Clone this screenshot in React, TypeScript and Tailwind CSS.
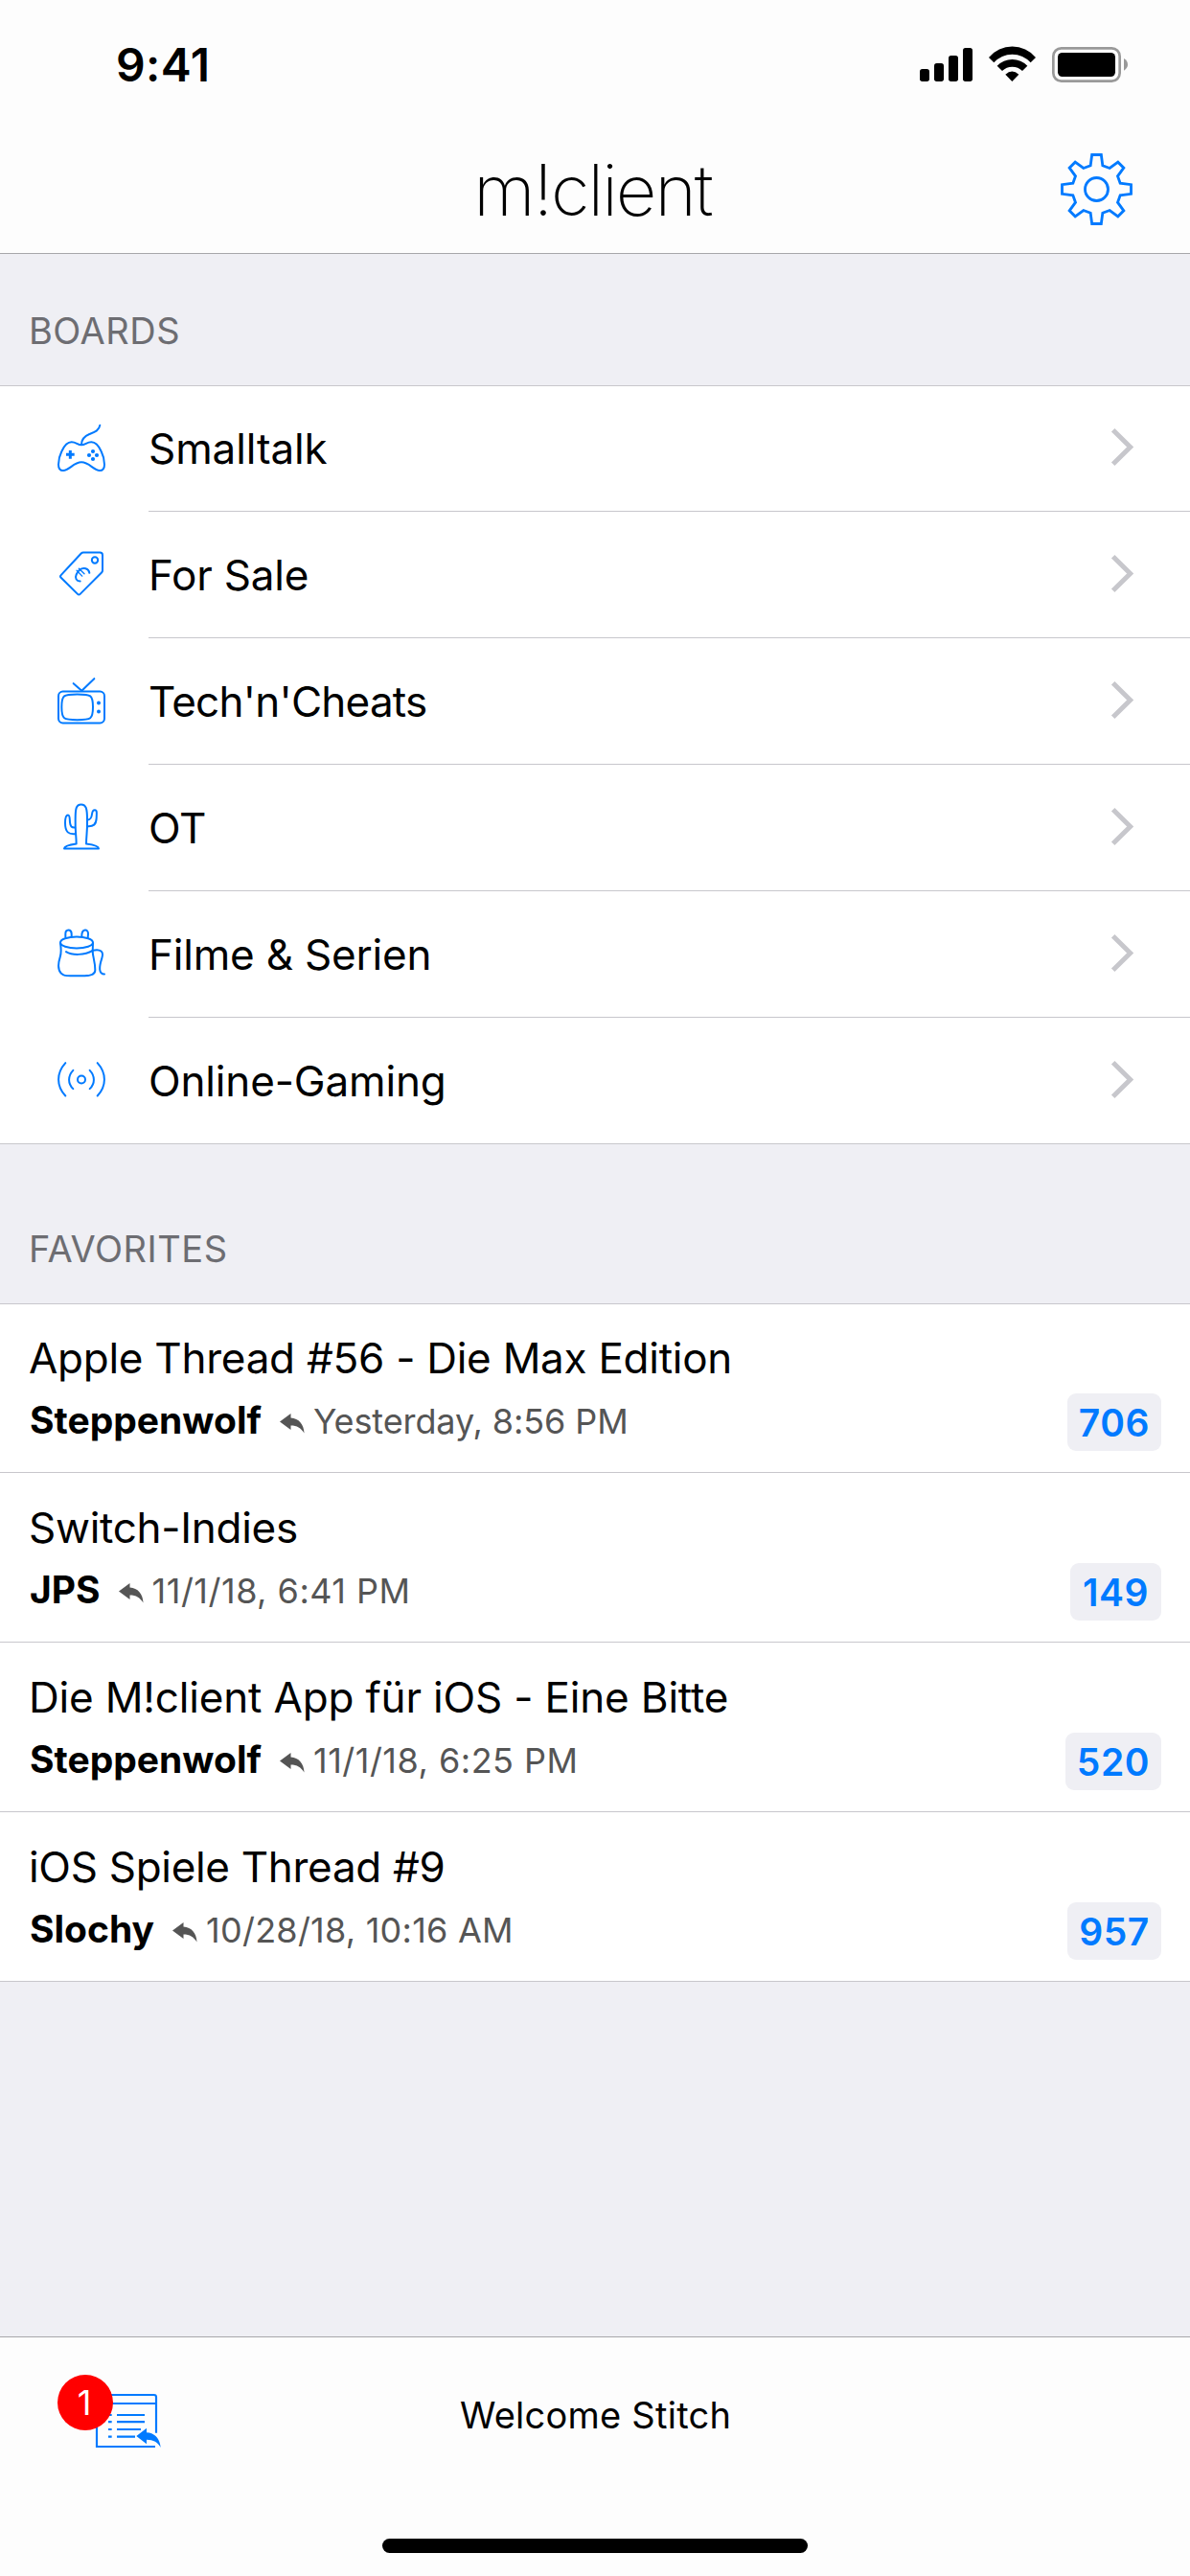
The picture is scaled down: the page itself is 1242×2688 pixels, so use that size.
import type { ReactNode } from "react";

type Board = { name: string; tracking: string; viewBox: string; drawing: ReactNode };

const boards: Board[] = [
  {
    name: "Smalltalk",
    tracking: "tracking-[-0.1px]",
    viewBox: "51 60 168 168",
    drawing: (
      <>
        <path d="M135 130C123 130 118 121 104 121C90 121 79 137 73 150C66 164 63 178 63 191C63 204 69 210 78 210C97 210 110 184 135 184C160 184 173 210 192 210C201 210 207 204 207 191C207 178 204 164 197 150C191 137 180 121 166 121C152 121 147 130 135 130Z" />
        <path d="M135 129C135 112 143 103 160 96C178 89 190 85 193 68" />
        <path d="M87 160H113M100 147V173" strokeWidth={9} strokeLinecap="butt" />
        <g fill="currentColor" stroke="none">
          <circle cx="171" cy="150" r="6.2" />
          <circle cx="159" cy="162" r="6.2" />
          <circle cx="183" cy="162" r="6.2" />
          <circle cx="171" cy="174" r="6.2" />
        </g>
      </>
    ),
  },
  {
    name: "For Sale",
    tracking: "tracking-[-0.2px]",
    viewBox: "51 454.5 168 168",
    drawing: (
      <>
        <path d="M141 468H193Q201 468 201 476V524Q201 528 198 531L131 598Q127 602 123 598L71 547Q67 543 71 539L134 471Q137 468 141 468Z" />
        <circle cx="177" cy="492" r="9.5" />
        <path d="M131 558C119 558 114 548 119 537C126 522 138 516 148 518C155 520 159 525 160 532" />
        <path d="M120 524L137 542M127 518L144 535" strokeWidth={4} />
      </>
    ),
  },
  {
    name: "Tech'n'Cheats",
    tracking: "tracking-[-0.75px]",
    viewBox: "51 70.5 168 168",
    drawing: (
      <>
        <rect x="63" y="123" width="144" height="99" rx="14" />
        <path d="M122 132C165 132 171 134 171 172C171 210 165 212 122 212C79 212 73 210 73 172C73 134 79 132 122 132Z" />
        <path d="M110 98L136 121L175 83" />
        <g fill="currentColor" stroke="none">
          <circle cx="189" cy="159" r="6" />
          <circle cx="189" cy="186" r="6" />
        </g>
      </>
    ),
  },
  {
    name: "OT",
    tracking: "tracking-[-0.4px]",
    viewBox: "51 466.5 168 168",
    drawing: (
      <>
        <path d="M119 600C119 575 115 560 116 525C116 490 118 477 134 477C150 477 153 490 153 525C154 560 150 575 150 600C165 602 189 606 189 615H81C81 606 105 602 119 600Z" />
        <path d="M116 569C95 571 84 564 84 535C84 518 87 510 93 510C99 510 98 520 99 533C100 545 104 550 115 549" />
        <path d="M155 525C164 524 167 517 168 507C169 498 172 494 177 494C184 494 183 503 182 520C181 540 172 546 155 545" />
      </>
    ),
  },
  {
    name: "Filme & Serien",
    tracking: "tracking-[-0.2px]",
    viewBox: "51 82.5 168 168",
    drawing: (
      <>
        <ellipse cx="120" cy="129" rx="51" ry="18" />
        <path d="M85 112V102C85 87 103 86 104 101V110" />
        <path d="M136 110C135 85 157 85 156 102L155 114" />
        <path d="M69 131C72 150 73 160 68 175C60 200 61 215 72 226C80 233 85 233 100 233H145C165 233 178 230 178 215C178 190 171 175 170 158L171 131" />
        <path d="M87 158C105 169 145 170 170 154C195 148 206 158 199 178C190 205 188 228 207 228" />
      </>
    ),
  },
  {
    name: "Online-Gaming",
    tracking: "tracking-[-0.15px]",
    viewBox: "51 478.5 168 168",
    drawing: (
      <>
        <circle cx="135" cy="558" r="12" />
        <path d="M109 529C92 547 92 570 109 587M161 529C178 547 178 570 161 587" />
        <path d="M85 506C56 538 56 578 85 609M185 506C214 538 214 578 185 609" />
      </>
    ),
  },
];

const favorites = [
  {
    title: "Apple Thread #56 - Die Max Edition",
    tracking: "tracking-[-0.26px]",
    author: "Steppenwolf",
    date: "Yesterday, 8:56 PM",
    dateTracking: "tracking-[-0.1px]",
    count: "706",
    badge: "w-[98px]",
  },
  {
    title: "Switch-Indies",
    tracking: "tracking-[-0.28px]",
    author: "JPS",
    date: "11/1/18, 6:41 PM",
    dateTracking: "tracking-[0.5px]",
    count: "149",
    badge: "w-[95px]",
  },
  {
    title: "Die M!client App für iOS - Eine Bitte",
    tracking: "tracking-[-0.17px]",
    author: "Steppenwolf",
    date: "11/1/18, 6:25 PM",
    dateTracking: "tracking-[0.5px]",
    count: "520",
    badge: "w-[100px]",
  },
  {
    title: "iOS Spiele Thread #9",
    tracking: "tracking-[-0.3px]",
    author: "Slochy",
    date: "10/28/18, 10:16 AM",
    dateTracking: "tracking-[0.25px]",
    count: "957",
    badge: "w-[98px]",
  },
];

function StatusIcons() {
  return (
    <svg className="h-[39px] w-[218px]" viewBox="90 84 654 117">
      <rect x="90" y="156" width="30" height="39" rx="8" />
      <rect x="135" y="138" width="30" height="57" rx="8" />
      <rect x="180" y="114" width="30" height="81" rx="8" />
      <rect x="225" y="90" width="30" height="105" rx="8" />
      <path d="M306 120A96 96 0 0 1 453 120L437 136A77 77 0 0 0 322 136Z" />
      <path d="M332 146A66 66 0 0 1 427 146L411 162A45 45 0 0 0 348 162Z" />
      <path d="M358 173Q379 154 400 173L379 195Z" />
      <rect x="508" y="91" width="208" height="103" rx="25" fill="none" stroke="#999" strokeWidth="8" />
      <rect x="522" y="105" width="180" height="75" rx="14" />
      <path d="M729 123Q741 130 741 142Q741 154 729 161Z" fill="#999" />
    </svg>
  );
}

function GearIcon() {
  return (
    <svg
      className="h-[79px] w-[79px] text-[#007aff]"
      viewBox="-118.5 -118.5 237 237"
      fill="none"
      stroke="currentColor"
      strokeWidth="8.5"
    >
      <path d="M-14.5 -108H14.5L19 -74L41 -66L67 -85L85 -67L66 -41L74 -19L108 -14.5V14.5L74 19L66 41L85 67L67 85L41 66L19 74L14.5 108H-14.5L-19 74L-41 66L-67 85L-85 67L-66 41L-74 19L-108 14.5V-14.5L-74 -19L-66 -41L-85 -67L-67 -85L-41 -66L-19 -74Z" />
      <circle r="36" />
    </svg>
  );
}

function Chevron() {
  return (
    <svg className="mb-[3px] h-[41px] w-[25px]" viewBox="233 137.5 75 123" fill="none" stroke="#c7c7cc" strokeWidth="15">
      <path d="M241 146L295 199L241 252" />
    </svg>
  );
}

function ReplyArrow() {
  return (
    <svg className="mb-px ml-[19px] h-[21px] w-[26px] shrink-0" viewBox="0 0 26 21" fill="#555">
      <path d="M0 8.5L11.5 0V4.5C20 5 25 11 25.5 20.5C22 15 18 12.5 11.5 12.5V17Z" />
    </svg>
  );
}

function ThreadsIcon() {
  return (
    <svg className="h-[58px] w-[70px] text-[#007aff]" viewBox="297 231 210 174" fill="none" stroke="currentColor" strokeWidth="6.5">
      <path d="M486 399H303V237H482Q489 237 489 244V356M303 264H489" />
      <path d="M366 300H453M366 321.500H453M366 345H441M366 368H423M339 300H350M339 321.500H350M339 345H350M339 368H350" />
      <path d="M427 366L459 341V355C485 356 501 375 503 402C495 385 480 377 459 377V391Z" fill="currentColor" stroke="none" />
    </svg>
  );
}

export default function App() {
  return (
    <div className="flex h-[2688px] w-[1242px] flex-col overflow-hidden bg-[#efeff4] font-['Inter',sans-serif] text-black">
      <header className="h-[265px] border-b border-[#a7a7aa] bg-[#fdfdfd]">
        <div className="flex h-[135px] items-center justify-between pr-16 pl-[121px]">
          <span className="text-[48px] leading-[60px] font-semibold tracking-[0.4px]">9:41</span>
          <StatusIcons />
        </div>
        <div className="flex h-[125px] items-center justify-between px-[58px]">
          <span className="w-[74px]" />
          <h1 className="pt-px text-[74px] leading-[90px] font-extralight tracking-[-2px]">m!client</h1>
          <GearIcon />
        </div>
      </header>

      <main className="grow">
        <h2 className="h-[137px] pt-[56px] pl-[30px] text-[38px] leading-[48px] tracking-[0.5px] text-[#6d6d72]">BOARDS</h2>
        <ul className="border-t border-[#c8c7cc] bg-white">
          {boards.map((board) => (
            <li
              key={board.name}
              className="group flex h-[132px] pl-[57px] first:h-[131px] last:border-b last:border-[#c8c7cc]"
            >
              <svg
                className="h-[56px] w-[56px] shrink-0 self-center text-[#007aff]"
                viewBox={board.viewBox}
                fill="none"
                stroke="currentColor"
                strokeWidth={6}
                strokeLinecap="round"
                strokeLinejoin="round"
              >
                {board.drawing}
              </svg>
              <div className="ml-[42px] flex grow items-center justify-between border-b border-[#c8c7cc] pr-[58px] group-last:border-b-0">
                <span className={`text-[44px] leading-[54px] ${board.tracking}`}>{board.name}</span>
                <Chevron />
              </div>
            </li>
          ))}
        </ul>

        <h2 className="h-[166px] pt-[85px] pl-[30px] text-[38px] leading-[48px] tracking-[0.5px] text-[#6d6d72]">FAVORITES</h2>
        <ul className="border-t border-[#c8c7cc] bg-white">
          {favorites.map((thread) => (
            <li
              key={thread.title}
              className="flex h-[177px] justify-between border-b border-[#c8c7cc] pt-[30px] pr-[30px] pl-[30px] first:h-[176px] first:pt-[29px]"
            >
              <div>
                <h3 className={`text-[44px] leading-[54px] ${thread.tracking}`}>{thread.title}</h3>
                <div className="mt-[15px] flex items-baseline leading-[46px]">
                  <span className="pl-px text-[39px] font-bold">{thread.author}</span>
                  <ReplyArrow />
                  <span className={`ml-[9px] text-[36px] text-[#555] ${thread.dateTracking}`}>{thread.date}</span>
                </div>
              </div>
              <span
                className={`mb-[22px] flex h-[60px] items-center justify-center self-end rounded-[9px] bg-[#efeff4] text-[39px] leading-none font-semibold tracking-[0.6px] text-[#007aff] ${thread.badge}`}
              >
                {thread.count}
              </span>
            </li>
          ))}
        </ul>
      </main>

      <footer className="flex h-[250px] flex-col items-center justify-between border-t border-[#a7a7aa] bg-[#fdfdfd] pb-6">
        <div className="flex w-full justify-between pr-[98px] pl-[99px]">
          <div className="relative mt-[58px]">
            <ThreadsIcon />
            <span className="absolute -top-[19px] -left-[39px] flex h-[58px] w-[58px] items-center justify-center rounded-full bg-[#f00] pr-[2px] text-[36px] leading-none text-white">
              1
            </span>
          </div>
          <p className="mt-[57px] text-[38px] leading-[48px] tracking-[0.25px]">Welcome Stitch</p>
          <span className="w-[70px]" />
        </div>
        <div className="h-[15px] w-[444px] rounded-full bg-black" />
      </footer>
    </div>
  );
}
